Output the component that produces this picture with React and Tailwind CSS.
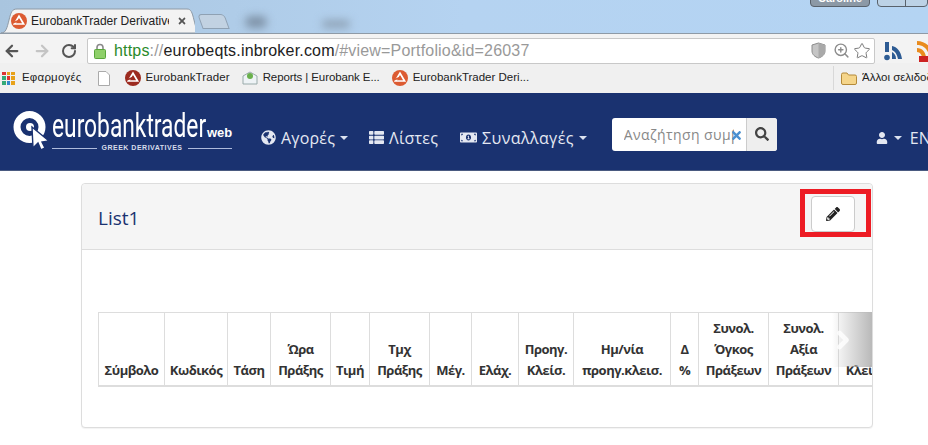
import React from "react";
import { FaGlobeAmericas, FaThList, FaMoneyBillAlt, FaSearch, FaUser, FaPencilAlt, FaTimes } from "react-icons/fa";
import { ArrowLeft, ArrowRight, RotateCw, Star, ZoomIn, ChevronRight } from "lucide-react";

const sans = "font-['Open_Sans','Noto_Sans',sans-serif]";
const ui = "font-['Liberation_Sans','DejaVu_Sans',sans-serif]";

const Caret = () => (
  <span className="inline-block w-0 h-0 border-x-[4px] border-x-transparent border-t-[4px] border-t-[#dbe2f0]" />
);

const EuroIcon = ({ bg = "#dc5b32" }) => (
  <svg width="16" height="16" viewBox="0 0 16 16" className="shrink-0 block">
    <circle cx="8" cy="8" r="8" fill={bg} />
    <path d="M8 3.2 12.6 11H3.4Z" fill="none" stroke="#fff" strokeWidth="1.7" />
    <path d="M3 9.5 9 7" stroke={bg} strokeWidth="1.5" />
  </svg>
);

const columns = [
  { w: 66, t: ["Σύμβολο"] },
  { w: 63, t: ["Κωδικός"] },
  { w: 43, t: ["Τάση"] },
  { w: 60, t: ["Ώρα", "Πράξης"] },
  { w: 39, t: ["Τιμή"] },
  { w: 60, t: ["Τμχ", "Πράξης"] },
  { w: 42, t: ["Μέγ."] },
  { w: 47, t: ["Ελάχ."] },
  { w: 55, t: ["Προηγ.", "Κλείσ."] },
  { w: 97, t: ["Ημ/νία", "προηγ.κλεισ."] },
  { w: 28, t: ["Δ", "%"] },
  { w: 70, t: ["Συνολ.", "Όγκος", "Πράξεων"] },
  { w: 70, t: ["Συνολ.", "Αξία", "Πράξεων"] },
  { w: 70, t: ["Κλείσιμο"] },
];

function TabStrip() {
  return (
    <div className="h-[33px] flex items-end overflow-hidden relative bg-gradient-to-r from-[#a9c5df] via-[#b5d3f1] to-[#b4d4f3]">
      <div className="absolute left-[245px] top-[16px] w-[22px] h-[12px] rounded-full bg-[#7f93a8] blur-[4px]" />
      <div className="absolute left-[322px] top-[20px] w-[28px] h-[8px] rounded-full bg-[#8ea2b6] blur-[4px]" />
      <div className="absolute right-0 top-[-10px] flex gap-[7px] items-start">
        <div className={`w-[60px] h-[17px] rounded-[4px] border border-[#59626c] bg-[#8c99a6] text-[11px] font-bold text-white text-center leading-[14px] ${ui}`}>Caroline</div>
        <div className="w-[51px] h-[17px] rounded-[4px] border border-[#59626c] bg-[#bcd2e6] flex">
          <div className="w-[28px] border-r border-[#59626c]" />
        </div>
      </div>
      <div className="relative w-[194px] h-[25px] ml-[1px] flex items-center pl-[10px] shrink-0">
        <svg className="absolute inset-0" width="194" height="25" viewBox="0 0 194 25">
          <path d="M0 25C5 25 6 20 8 12 10 4 11 1 16 1H186C190 1 191 4 193 12 195 20 196 25 200 25Z" fill="#f3f3f3" stroke="#8e9aa6" />
        </svg>
        <div className="relative flex items-center gap-[4px]">
          <EuroIcon />
          <span className={`w-[138px] overflow-hidden whitespace-nowrap text-[12px] text-[#222] ${ui}`}>EurobankTrader Derivatives</span>
          <FaTimes className="text-[#555] text-[10px] ml-[4px]" />
        </div>
      </div>
      <div className="w-[27px] h-[15px] mb-[4px] ml-[5px] rounded-t-[4px] skew-x-[20deg] bg-[#c2d2e2] border border-[#8fa1b3]" />
    </div>
  );
}

function Toolbar() {
  return (
    <div className="h-[30px] pt-[4px] bg-[#f3f3f3] border-t border-[#8e9aa6] flex items-center pl-[2px] pr-0">
      <ArrowLeft size={18} strokeWidth={3} className="text-[#555] shrink-0 ml-[1px]" />
      <ArrowRight size={18} strokeWidth={3} className="text-[#c4c4c4] shrink-0 ml-[12px]" />
      <RotateCw size={16} strokeWidth={3} className="text-[#555] shrink-0 ml-[10px]" />
      <div className="ml-[10px] w-[788px] h-[26px] bg-white border border-[#c8c8c8] rounded-[2px] flex items-center shrink-0">
        <svg width="12" height="16" viewBox="0 0 12 16" className="ml-[6px] shrink-0">
          <path d="M3 7V4.5a3 3 0 0 1 6 0V7" fill="none" stroke="#8a8a8a" strokeWidth="1.6" />
          <rect x="0.5" y="6.5" width="11" height="9" rx="1" fill="#8fd06a" stroke="#5aa63c" />
        </svg>
        <span className={`ml-[8px] text-[16px] tracking-[0.18px] whitespace-nowrap ${ui}`}>
          <span className="text-[#2a8a2a]">https</span>
          <span className="text-[#999]">://</span>
          <span className="text-[#222]">eurobeqts.inbroker.com</span>
          <span className="text-[#999]">/#view=Portfolio&amp;id=26037</span>
        </span>
        <div className="ml-auto flex items-center gap-[3px] pr-[3px]">
          <svg width="15" height="17" viewBox="0 0 15 17">
            <path d="M7.5 1 14 3v6c0 3.5-3 6-6.500 7C4 15 1 12.500 1 9V3Z" fill="#c5c5c5" stroke="#8c8c8c" />
            <path d="M7.5 1 14 3v6c0 3.500-3 6-6.500 7Z" fill="#a9a9a9" />
          </svg>
          <ZoomIn size={17} strokeWidth={2} className="text-[#8c8c8c] ml-[4px]" />
          <Star size={18} strokeWidth={1.3} className="text-[#777]" />
        </div>
      </div>
      <svg width="20" height="20" viewBox="0 0 20 20" className="ml-[9px] shrink-0">
        <circle cx="3" cy="16.500" r="2.800" fill="#2d5b93" />
        <rect x="1" y="1" width="4" height="10" fill="#2d5b93" />
        <path d="M8 5c5 1 9 5 10 13h-4C13 13 11 10 8 9Z" fill="#2d5b93" />
        <path d="M8 11c2 1 4 3 4 7H8Z" fill="#2d5b93" />
      </svg>
      <svg width="20" height="22" viewBox="0 0 20 22" className="ml-[12px] shrink-0">
        <path d="M1 1c9 0 16 7 16 17h-4C13 10 8 5 1 5Z" fill="#e98b1e" />
        <path d="M1 8c5 0 9 4 9 10H6c0-3-2-6-5-6Z" fill="#e98b1e" />
        <rect x="3" y="16" width="14" height="6" fill="#c22" />
      </svg>
    </div>
  );
}

function Bookmarks() {
  return (
    <div className={`h-[30px] bg-[#f0f0f0] flex items-center text-[11.5px] text-[#222] whitespace-nowrap overflow-hidden ${ui}`}>
      <div className="grid grid-cols-3 gap-[1px] w-[13px] h-[13px] ml-[2px] shrink-0">
        {["#d33", "#e8a21a", "#e8a21a", "#3a7", "#d33", "#e8a21a", "#3a7", "#38c", "#e8a21a"].map((c, i) => (
          <span key={i} style={{ background: c }} />
        ))}
      </div>
      <span className="ml-[7px] tracking-[0.2px]">Εφαρμογές</span>
      <svg width="12" height="15" viewBox="0 0 12 15" className="ml-[16px] shrink-0">
        <path d="M.5.5H8L11.500 4V14.500H.5Z" fill="#fff" stroke="#aaa" />
      </svg>
      <span className="ml-[15px]"><EuroIcon bg="#9c2b20" /></span>
      <span className="ml-[5px] tracking-[0.1px]">EurobankTrader</span>
      <svg width="16" height="14" viewBox="0 0 16 14" className="ml-[12px] shrink-0">
        <path d="M1 5 8 1l7 4v8H1Z" fill="#eef3f6" stroke="#9aa" />
        <circle cx="8" cy="5" r="3" fill="#6ab04c" />
      </svg>
      <span className="ml-[5px] tracking-[-0.1px]">Reports | Eurobank E...</span>
      <span className="ml-[12px]"><EuroIcon /></span>
      <span className="ml-[5px]">EurobankTrader Deri...</span>
      <div className="ml-auto w-px h-[24px] bg-[#d8d8d8]" />
      <svg width="16" height="13" viewBox="0 0 16 13" className="ml-[7px] shrink-0">
        <path d="M.5 2.500Q.5 1 2 1H6L7.500 3H14Q15.500 3 15.500 4.500V11Q15.500 12.500 14 12.500H2Q.5 12.500 .5 11Z" fill="#f5d58a" stroke="#b48a3a" />
      </svg>
      <span className="ml-[5px] w-[66px] overflow-hidden shrink-0">Άλλοι σελιδοδείκτες</span>
    </div>
  );
}

function Logo() {
  return (
    <div className="flex items-start shrink-0 ml-[13px] w-[218px]">
      <svg width="38" height="40" viewBox="0 0 38 40" className="shrink-0">
        <circle cx="16.500" cy="17" r="12.500" fill="none" stroke="#fff" strokeWidth="7" />
        <circle cx="17" cy="17" r="4" fill="#fff" />
        <path d="M19 17 36 31l-7 1 3 6-4 2-3-7-5 5Z" fill="#fff" stroke="#1a3270" strokeWidth="1.400" />
      </svg>
      <div className="ml-[1px] w-[180px]">
        <div className="flex items-baseline h-[32px] text-white leading-[32px] whitespace-nowrap">
          <span className="w-[151px] inline-block">
            <span className="inline-block origin-left scale-x-[0.69] text-[33px] font-['Roboto',sans-serif]">eurobanktrader</span>
          </span>
          <span className={`ml-[4px] text-[13px] font-bold ${ui}`}>web</span>
        </div>
        <div className="flex items-center gap-[5px] mt-[1px]">
          <div className="h-px flex-1 bg-[#aebbdc]" />
          <span className={`text-[7px] font-bold tracking-[0.5px] text-[#d6dcea] ${ui}`}>GREEK DERIVATIVES</span>
          <div className="h-px flex-1 bg-[#aebbdc]" />
        </div>
      </div>
    </div>
  );
}

function Nav() {
  return (
    <div className={`h-[78px] bg-[#1a3270] border-b border-[#4a5a80] flex items-center overflow-hidden text-[#e4e8f2] ${sans}`}>
      <Logo />
      <div className="ml-[30px] mt-[12px] flex items-center gap-[5px] shrink-0">
        <FaGlobeAmericas className="text-[15px]" />
        <span className="text-[16px] tracking-[0.2px]">Αγορές</span>
        <Caret />
      </div>
      <div className="ml-[21px] mt-[12px] flex items-center gap-[5px] shrink-0">
        <FaThList className="text-[15px]" />
        <span className="text-[16px] tracking-[0.2px]">Λίστες</span>
      </div>
      <div className="ml-[22px] mt-[12px] flex items-center gap-[5px] shrink-0">
        <FaMoneyBillAlt className="text-[17px]" />
        <span className="text-[16px] tracking-[0.4px]">Συναλλαγές</span>
        <Caret />
      </div>
      <div className="ml-[25px] flex w-[165px] h-[33px] rounded-[3px] overflow-hidden shrink-0 mt-[5px] bg-white">
        <div className="relative w-[134px] flex items-center pl-[12px] overflow-hidden">
          <span className="w-[110px] overflow-hidden text-[14px] text-[#888] tracking-[0.4px] whitespace-nowrap">Αναζήτηση συμβόλου</span>
          <FaTimes className="absolute left-[118px] top-[11px] text-[#4a90d0] text-[13px]" />
        </div>
        <div className="w-[31px] bg-[#eeeeee] border-l border-[#ccc] flex items-center justify-center">
          <FaSearch className="text-[#444] text-[14px]" />
        </div>
      </div>
      <div className="ml-[99px] mt-[12px] flex items-center gap-[6px] shrink-0">
        <FaUser className="text-[12px]" />
        <Caret />
        <span className="text-[16px] ml-[2px]">EN</span>
      </div>
    </div>
  );
}

function Panel() {
  return (
    <div className={`ml-[81px] mt-[12px] w-[792px] h-[245px] bg-white border border-[#dddddd] rounded-[4px] shadow-[0_1px_1px_rgba(0,0,0,0.05)] ${sans}`}>
      <div className="relative h-[66px] bg-[#f5f5f5] border-b border-[#dddddd] rounded-t-[4px] flex items-center justify-between pl-[16px] pr-[17px]">
        <span className="text-[19px] text-[#1a3270] mt-[3px]">List1</span>
        <button className="w-[44px] h-[36px] bg-white border border-[#cccccc] rounded-[4px] flex items-center justify-center -mt-[6px]">
          <FaPencilAlt className="text-[#222] text-[14px]" />
        </button>
        <div className="absolute left-[718px] top-[5px] w-[71px] h-[48px] border-[5px] border-[#ed1c24]" />
      </div>
      <div className="relative ml-[16px] mt-[62px] overflow-hidden">
        <table className="table-fixed border-collapse w-[810px]">
          <colgroup>
            {columns.map((c, i) => <col key={i} style={{ width: c.w }} />)}
          </colgroup>
          <thead>
            <tr>
              {columns.map((c, i) => (
                <th key={i} className="border border-[#dddddd] border-b-2 px-0 pt-[5px] pb-[4px] align-bottom text-center text-[13px] tracking-[-0.5px] leading-[21px] font-bold text-[#333333] whitespace-nowrap overflow-hidden">
                  {c.t.map((l, j) => <div key={j}>{l}</div>)}
                </th>
              ))}
            </tr>
          </thead>
        </table>
        <div className="absolute right-0 top-0 w-[40px] h-[55px] bg-gradient-to-r from-[rgba(180,180,180,0)] to-[#b9b9b9] flex items-center">
          <ChevronRight size={28} strokeWidth={4} className="text-white/80 ml-[-3px]" />
        </div>
      </div>
    </div>
  );
}

export default function App() {
  return (
    <div className="w-[928px] h-[445px] overflow-hidden bg-white">
      <TabStrip />
      <Toolbar />
      <Bookmarks />
      <Nav />
      <Panel />
    </div>
  );
}
